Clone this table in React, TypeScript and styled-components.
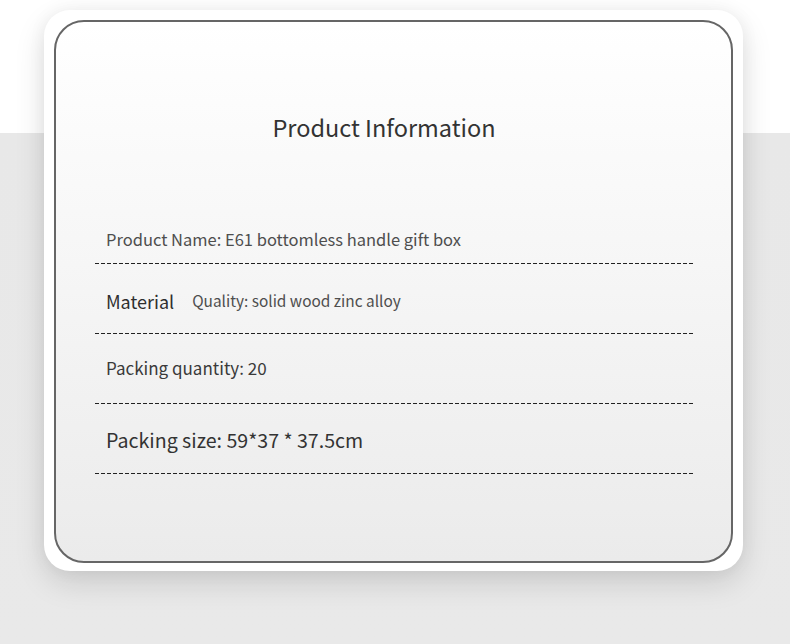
import React from "react";
import styled, { createGlobalStyle } from "styled-components";

const Global = createGlobalStyle`
  html, body { margin: 0; padding: 0; }
  body {
    width: 790px;
    height: 644px;
    overflow: hidden;
    font-family: "Noto Sans CJK SC", "Noto Sans", sans-serif;
    background: linear-gradient(to bottom, #ffffff 0, #ffffff 133px, #e8e8e8 133px, #e9e9e9 100%);
  }
`;

const Page = styled.div`
  width: 790px;
  height: 644px;
  padding: 10px 0 0 44px;
  box-sizing: border-box;
`;

const Frame = styled.div`
  width: 699px;
  height: 561px;
  box-sizing: border-box;
  padding: 10px;
  background: #ffffff;
  border-radius: 26px;
  box-shadow: 0 12px 30px rgba(0, 0, 0, 0.13), 0 0 18px rgba(0, 0, 0, 0.05);
`;

const Card = styled.div`
  height: 543px;
  box-sizing: border-box;
  border: 2px solid #666666;
  border-radius: 30px;
  background: linear-gradient(to bottom, #ffffff 0%, #f6f6f6 45%, #ebebeb 100%);
  display: flex;
  flex-direction: column;
  padding: 90px 38px 0 39px;
`;

const Title = styled.h1`
  margin: 0;
  font-weight: 400;
  font-size: 23.5px;
  line-height: 30px;
  color: #333333;
  text-align: center;
  height: 30px;
  padding-right: 20px;
`;

const Row = styled.div<{ $top: number; $bottom?: number; $first?: boolean }>`
  height: ${(p) => (p.$first ? 122 : 70)}px;
  box-sizing: border-box;
  padding: ${(p) => p.$top}px 0 ${(p) => p.$bottom ?? 0}px 11px;
  display: flex;
  align-items: center;
  gap: 18px;
  background-image: repeating-linear-gradient(
    to right,
    #222222 0,
    #222222 4px,
    transparent 4px,
    transparent 6px
  );
  background-size: 100% 1px;
  background-position: left bottom;
  background-repeat: no-repeat;
`;

const Text = styled.span<{ $size: number; $color?: string; $lift?: number }>`
  font-size: ${(p) => p.$size}px;
  color: ${(p) => p.$color ?? "#444444"};
  line-height: 1.2;
  white-space: nowrap;
  margin-bottom: ${(p) => p.$lift ?? 0}px;
`;

export default function App() {
  return (
    <>
      <Global />
      <Page>
        <Frame>
          <Card>
            <Title>Product Information</Title>
            <Row $first $top={74}>
              <Text $size={16.5} $color="#4e4e4e">
                Product Name: E61 bottomless handle gift box
              </Text>
            </Row>
            <Row $top={6}>
              <Text $size={18} $color="#2e2e2e">Material</Text>
              <Text $size={15.4} $color="#4e4e4e" $lift={4}>
                Quality: solid wood zinc alloy
              </Text>
            </Row>
            <Row $top={0} $bottom={2}>
              <Text $size={17} $color="#3a3a3a">Packing quantity: 20</Text>
            </Row>
            <Row $top={2}>
              <Text $size={19.6} $color="#333333">
                Packing size: 59*37 * 37.5cm
              </Text>
            </Row>
          </Card>
        </Frame>
      </Page>
    </>
  );
}
